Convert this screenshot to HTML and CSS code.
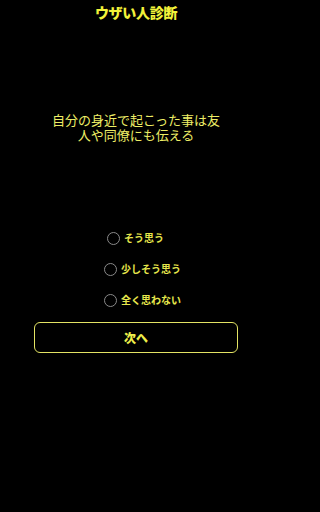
FILE: index.html
```html
<!DOCTYPE html>
<html lang="ja">
<head>
<meta charset="utf-8">
<link rel="stylesheet" href="styles.css">
</head>
<body>
<div class="page">
  <h1 class="title">ウザい人診断</h1>
  <p class="question">自分の身近で起こった事は友人や同僚にも伝える</p>
  <div class="options">
    <label class="option option-first"><span class="radio"></span><span class="label">そう思う</span></label>
    <label class="option"><span class="radio"></span><span class="label">少しそう思う</span></label>
    <label class="option"><span class="radio"></span><span class="label">全く思わない</span></label>
  </div>
  <button class="next">次へ</button>
</div>
</body>
</html>
```
FILE: styles.css
```css
html, body {
  margin: 0;
  padding: 0;
  background: #000;
}
body {
  width: 272px;
  height: 512px;
  font-family: "Noto Sans CJK JP", "Noto Sans", sans-serif;
  color: #eaea55;
}
.page {
  display: flex;
  flex-direction: column;
  align-items: center;
}
.title {
  margin: 3px 0 0;
  font-size: 14px;
  line-height: 18px;
  font-weight: 900;
  color: #f2f23a;
  letter-spacing: -0.3px;
}
.question {
  margin: 91px 0 0;
  width: 176px;
  text-align: center;
  font-size: 13px;
  line-height: 15px;
  color: #eded66;
}
.options {
  align-self: flex-start;
  margin: 89px 0 0 104px;
  display: flex;
  flex-direction: column;
  align-items: flex-start;
  gap: 17px;
}
.option {
  display: flex;
  align-items: center;
  gap: 4px;
  height: 14px;
}
.option-first {
  padding-left: 3px;
}
.radio {
  width: 11px;
  height: 11px;
  border: 1.5px solid #8a8a8a;
  border-radius: 50%;
}
.label {
  font-size: 10px;
  line-height: 14px;
  font-weight: 700;
  color: #e6e64c;
}
.next {
  margin-top: 15px;
  width: 204px;
  height: 31px;
  background: #000;
  border: 1.5px solid #e4e464;
  border-radius: 6px;
  color: #eeee4a;
  font-family: "Noto Sans CJK JP", sans-serif;
  font-size: 12px;
  font-weight: 900;
  padding: 0;
}
```
